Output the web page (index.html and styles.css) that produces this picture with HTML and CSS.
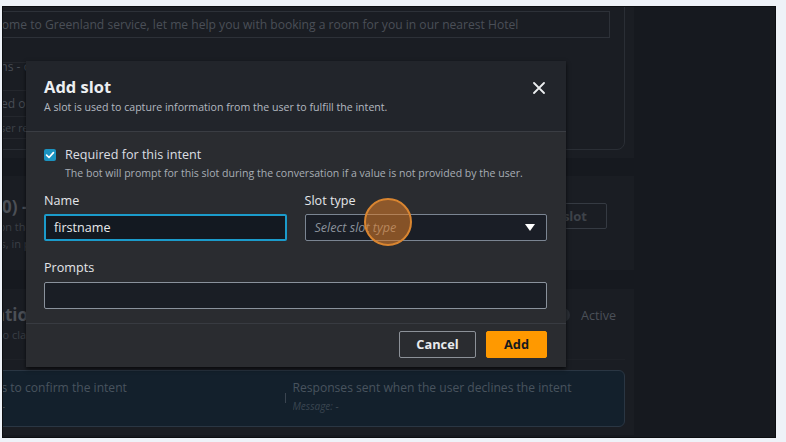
FILE: index.html
```html
<!DOCTYPE html>
<html lang="en">
<head>
<meta charset="utf-8">
<title>Add slot</title>
<link rel="stylesheet" href="styles.css">
</head>
<body>
<div class="frame">
  <div class="main">
    <section class="panel panel-a">
      <div class="card">
        <div class="bg-input welcome">Welcome to Greenland service, let me help you with booking a room for you in our nearest Hotel</div>
        <div class="row r1"></div>
        <div class="row r2"><span class="row-head">Variations - optional</span></div>
        <div class="row r3"><span class="row-text">Advanced options</span></div>
        <div class="row r4"><span class="row-small">The user receives these messages</span></div>
        <div class="row r5"></div>
      </div>
    </section>

    <section class="panel panel-b">
      <div class="panel-head">
        <div class="head-copy">
          <h2 class="bg-title">Slots (0) - optional</h2>
          <p class="bg-desc">Information that a bot needs to fulfill the intent.</p>
          <p class="bg-desc">Slot values, in priority order, are prompted for by the bot.</p>
        </div>
        <span class="bg-btn">Add slot</span>
      </div>
    </section>

    <section class="panel panel-c">
      <div class="panel-head conf-head">
        <div class="head-copy shift">
          <h2 class="bg-title">Confirmation</h2>
          <p class="bg-desc desc-c">Prompts to clarify whether the user wants to fulfill the intent.</p>
        </div>
        <span class="toggle"><span class="track"></span>Active</span>
      </div>
      <div class="conf-body">
        <div class="blue-box">
          <div class="col col-left">
            <div class="col-title">Prompts to confirm the intent</div>
            <div class="col-msg">Message: -</div>
          </div>
          <div class="divider"></div>
          <div class="col">
            <div class="col-title">Responses sent when the user declines the intent</div>
            <div class="col-msg">Message: -</div>
          </div>
        </div>
      </div>
    </section>
  </div>

  <div class="modal" role="dialog" aria-label="Add slot">
    <header class="modal-head">
      <div class="head-text">
        <h1 class="modal-title">Add slot</h1>
        <p class="modal-sub">A slot is used to capture information from the user to fulfill the intent.</p>
      </div>
      <span class="close" aria-label="Close">
        <svg width="12" height="12" viewBox="0 0 12 12"><path d="M1 1L11 11M11 1L1 11" stroke="#eceef0" stroke-width="1.8" stroke-linecap="round"/></svg>
      </span>
    </header>

    <div class="modal-body">
      <div class="check-row">
        <span class="checkbox">
          <svg width="12" height="12" viewBox="0 0 12 12"><path d="M2.6 6.2L5 8.5L9.4 3.6" fill="none" stroke="#ffffff" stroke-width="1.7" stroke-linecap="round" stroke-linejoin="round"/></svg>
        </span>
        <span class="check-text">
          <span class="check-label">Required for this intent</span>
          <span class="check-desc">The bot will prompt for this slot during the conversation if a value is not provided by the user.</span>
        </span>
      </div>

      <div class="grid2">
        <div class="field">
          <div class="label">Name</div>
          <div class="input focus">firstname</div>
        </div>
        <div class="field">
          <div class="label">Slot type</div>
          <div class="select">
            <span class="ph">Select slot type</span>
            <svg width="10" height="7" viewBox="0 0 10 7"><path d="M0 0H10L5 7Z" fill="#ffffff"/></svg>
          </div>
          <span class="click-dot"></span>
        </div>
      </div>

      <div class="field prompts">
        <div class="label">Prompts</div>
        <div class="input"></div>
      </div>
    </div>

    <footer class="modal-foot">
      <span class="btn btn-cancel">Cancel</span>
      <span class="btn btn-add">Add</span>
    </footer>
  </div>
</div>
</body>
</html>
```

FILE: styles.css
```css
* { box-sizing: border-box; margin: 0; padding: 0; }

body {
  background: #eef2f8;
  font-family: "Open Sans", "Noto Sans", sans-serif;
}

.frame {
  position: relative;
  margin: 6px 0 0 2px;
  width: 774px;
  height: 432px;
  border: 1px solid #0c0e11;
  background: #16191f;
  overflow: hidden;
}

/* ---------- dimmed background page ---------- */
.main {
  margin-left: -66px;
  width: 697px;
  display: flex;
  flex-direction: column;
  gap: 18px;
}

.panel {
  background: #1a1d23;
  padding-right: 9px;
}

.panel-a { padding-bottom: 8px; }

.card {
  margin-top: -10px;
  border: 1px solid #2a2e35;
  border-radius: 0 0 8px 8px;
  padding: 13px 14px 0 18px;
}

.bg-input {
  height: 27px;
  border: 1px solid #2d3138;
  padding-left: 18px;
  font-size: 12.1px;
  line-height: 25px;
  color: #4a4f57;
  white-space: nowrap;
  overflow: hidden;
}

.row {
  width: 560px;
  border-top: 1px solid #24272d;
  white-space: nowrap;
  color: #474c54;
}
.r1 { height: 24px; border-top: 0; }
.r2 { height: 28px; font-size: 12.1px; }
.r2 .row-head { display: block; margin-left: 1px; margin-top: -4px; line-height: 16px; }
.r3 { height: 26px; font-size: 12.1px; line-height: 25px; padding-left: 4px; }
.r4 { height: 22px; font-size: 10.5px; line-height: 22px; padding-left: 17px; color: #3e434a; }
.r5 { height: 11px; }

.panel-head {
  display: flex;
  justify-content: space-between;
  align-items: flex-start;
}

.panel-b { height: 94px; padding-top: 20px; }
.panel-b .head-copy { padding-left: 14px; }

.bg-title {
  font-size: 17px;
  font-weight: 700;
  line-height: 22px;
  color: #4b4f56;
  white-space: nowrap;
}

.bg-desc {
  font-size: 11px;
  line-height: 17px;
  color: #3b3f46;
  white-space: nowrap;
}

.bg-btn {
  margin-top: 7px;
  margin-right: 18px;
  height: 26px;
  padding: 0 19px;
  border: 1px solid #353a42;
  border-radius: 2px;
  font-size: 13px;
  font-weight: 700;
  line-height: 24px;
  color: #3e434a;
}

.panel-c { margin-top: 1px; height: 146px; }

.conf-head {
  height: 70px;
  padding-top: 15px;
  align-items: flex-start;
}
.shift { margin-left: -11px; }
.desc-c { margin-left: 26px; }

.toggle {
  display: flex;
  align-items: center;
  gap: 11px;
  margin-top: 2px;
  margin-right: 9px;
  height: 18px;
  font-size: 12.6px;
  color: #4b5058;
}
.track {
  width: 26px;
  height: 14px;
  border-radius: 7px;
  background: #2b2f36;
}

.conf-body {
  height: 76px;
  border-top: 1px solid #1e2127;
  padding-top: 10px;
  padding-left: 7px;
}

.blue-box {
  height: 57px;
  background: #13202c;
  border: 1px solid #2a3643;
  border-radius: 6px;
  padding: 8px 8px 0 9px;
  display: grid;
  grid-template-columns: 1fr 1px 1fr;
  column-gap: 7px;
}

.col { white-space: nowrap; overflow: hidden; }
.col-left { padding-left: 5px; }
.col-title {
  font-size: 12.1px;
  line-height: 18px;
  color: #48535e;
}
.col-msg {
  font-size: 10px;
  font-style: italic;
  line-height: 18px;
  color: #3a4550;
}

.divider {
  margin-top: 14px;
  height: 10px;
  background: #3a4450;
}

/* ---------- modal ---------- */
.modal {
  position: absolute;
  left: 23px;
  top: 54px;
  width: 540px;
  height: 306px;
  background: #2a2c30;
  box-shadow: 0 2px 4px rgba(0, 0, 0, 0.7);
  display: flex;
  flex-direction: column;
}

.modal-head {
  display: flex;
  justify-content: space-between;
  align-items: flex-start;
  background: #22252b;
  border-bottom: 1px solid #3a3d43;
  padding: 16px 21px 17px 18px;
}

.modal-title {
  font-size: 16.5px;
  font-weight: 700;
  line-height: 20px;
  color: #eceef1;
}

.modal-sub {
  margin-top: 3px;
  font-size: 10.6px;
  line-height: 14px;
  color: #b3b9c0;
}

.close {
  display: block;
  width: 12px;
  height: 12px;
  margin-top: 5px;
}
.close svg { display: block; }

.modal-body {
  flex: 1;
  padding: 14px 19px 14px 18px;
}

.check-row {
  display: flex;
  gap: 9px;
  align-items: flex-start;
}

.checkbox {
  flex: none;
  width: 12px;
  height: 12px;
  margin-top: 3px;
  border-radius: 2px;
  background: #1b93c0;
}
.checkbox svg { display: block; }

.check-text { display: flex; flex-direction: column; }

.check-label {
  font-size: 12.6px;
  line-height: 18px;
  color: #dcdfe3;
}

.check-desc {
  margin-top: 2px;
  font-size: 10.55px;
  line-height: 14px;
  color: #a8aeb5;
}

.grid2 {
  margin-top: 11px;
  display: grid;
  grid-template-columns: 1fr 1fr;
  column-gap: 18px;
}

.field { position: relative; }

.label {
  font-size: 12.6px;
  line-height: 18px;
  color: #e4e6e9;
  margin-bottom: 5px;
}
.grid2 .label { margin-top: 1px; margin-bottom: 4px; }

.input {
  height: 27px;
  border: 1px solid #8a929c;
  border-radius: 2px;
  background: #1a1e25;
  padding-left: 9px;
  font-size: 12.6px;
  line-height: 25px;
  color: #e8eaed;
}

.input.focus {
  border: 2px solid #1b9bcb;
  background: #131921;
  padding-left: 8px;
  line-height: 23px;
}

.select {
  height: 27px;
  border: 1px solid #7b8592;
  border-radius: 2px;
  background: #1a1e26;
  padding: 0 11px 0 9px;
  display: flex;
  align-items: center;
  justify-content: space-between;
}

.ph {
  font-size: 12.6px;
  font-style: italic;
  color: #8b929b;
}

.select svg { display: block; }

.click-dot {
  position: absolute;
  left: 59px;
  top: 7px;
  width: 48px;
  height: 48px;
  border-radius: 50%;
  background: rgba(222, 125, 40, 0.55);
  border: 2px solid #d98530;
}

.prompts { margin-top: 18px; }
.prompts .label { margin-top: 1px; margin-bottom: 5px; }

.modal-foot {
  border-top: 1px solid #383b41;
  padding: 7px 19px 9px;
  display: flex;
  justify-content: flex-end;
  gap: 10px;
}

.btn {
  height: 27px;
  border-radius: 2px;
  font-size: 12.8px;
  font-weight: 700;
  line-height: 25px;
  text-align: center;
}

.btn-cancel {
  width: 77px;
  border: 1px solid #8c9198;
  color: #e8eaed;
}

.btn-add {
  width: 61px;
  border: 1px solid #ff9900;
  background: #ff9900;
  color: #16191f;
}
```
